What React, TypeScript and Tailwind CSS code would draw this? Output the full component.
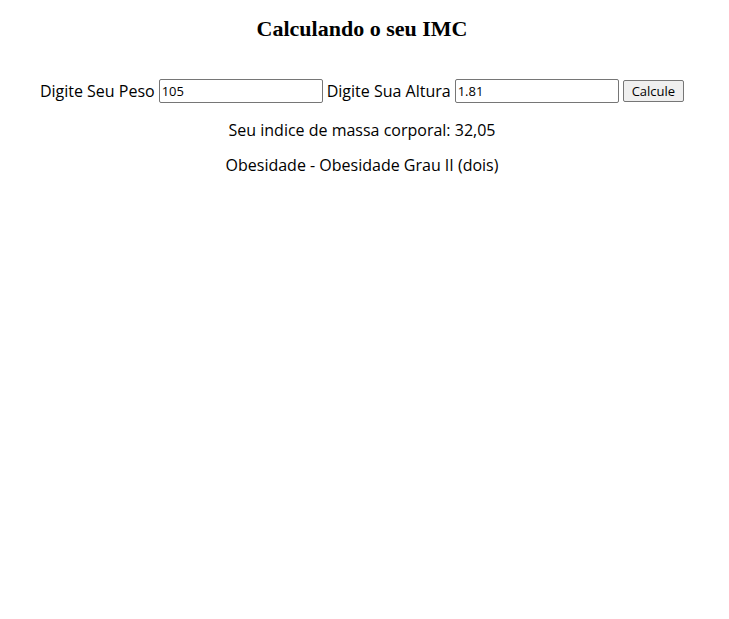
import React from 'react';

const App: React.FC = () => {
  return (
    <div className="min-h-screen bg-white text-black font-['Open_Sans',sans-serif] text-base">
      <div className="text-center pr-[5px]">
        <h1 className="pt-[15px] font-['Liberation_Serif',serif] font-bold text-[22px] leading-[28px]">
          Calculando o seu IMC
        </h1>

        <div className="mt-[36px] flex items-center justify-center gap-[4px] leading-[22px]">
          <span>Digite Seu Peso</span>
          <input
            type="text"
            defaultValue="105"
            className="w-[164px] h-[24px] px-[2px] border border-[#767676] rounded-[2px] text-[13px] text-black"
          />
          <span>Digite Sua Altura</span>
          <input
            type="text"
            defaultValue="1.81"
            className="w-[164px] h-[24px] px-[2px] border border-[#767676] rounded-[2px] text-[13px] text-black"
          />
          <button className="h-[22px] px-[8px] bg-[#efefef] border border-[#767676] rounded-[2px] text-[13px] leading-[18px]">
            Calcule
          </button>
        </div>

        <p className="mt-[16px] leading-[22px]">Seu indice de massa corporal: 32,05</p>
        <p className="mt-[13px] leading-[22px]">Obesidade - Obesidade Grau II (dois)</p>
      </div>
    </div>
  );
};

export default App;
